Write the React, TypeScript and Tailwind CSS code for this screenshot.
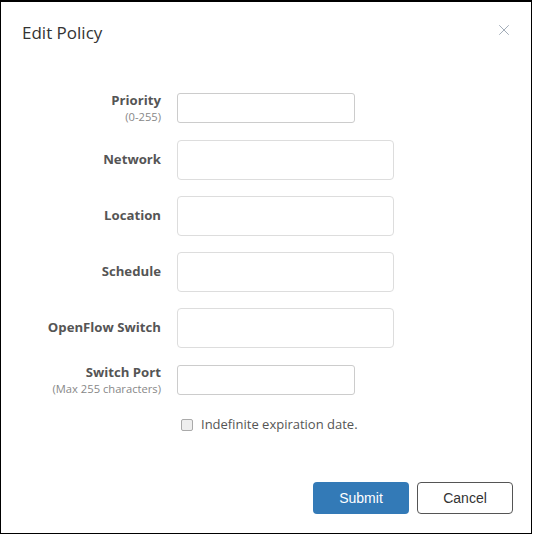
import { X } from 'lucide-react'

type Field = {
  label: string
  hint?: string
  size: 'sm' | 'lg'
}

const fields: Field[] = [
  { label: 'Priority', hint: '(0-255)', size: 'sm' },
  { label: 'Network', size: 'lg' },
  { label: 'Location', size: 'lg' },
  { label: 'Schedule', size: 'lg' },
  { label: 'OpenFlow Switch', size: 'lg' },
  { label: 'Switch Port', hint: '(Max 255 characters)', size: 'sm' },
]

function FieldRow({ field }: { field: Field }) {
  const small = field.size === 'sm'
  return (
    <div className="flex items-center gap-4">
      <div className="w-[160px] shrink-0 text-right leading-none">
        <div className="text-[13.2px] font-bold text-[#555]">{field.label}</div>
        {field.hint && <div className="mt-[3px] text-[11.2px] text-[#888]">{field.hint}</div>}
      </div>
      {small ? (
        <input
          type="text"
          className="h-[30px] w-[178px] rounded-[3px] border border-[#ccc] bg-white px-2 text-[13px] outline-none"
        />
      ) : (
        <input
          type="text"
          className="h-[40px] w-[217px] rounded-[4px] border border-[#ddd] bg-white px-2 text-[13px] outline-none"
        />
      )}
    </div>
  )
}

export default function App() {
  return (
    <div className="h-[534px] w-[533px] bg-white" style={{ fontFamily: '"Open Sans", sans-serif' }}>
      <div className="flex h-full w-[532px] flex-col border border-t-2 border-black">
        <div className="flex items-start justify-between pl-[21px] pr-[18px] pt-[18px]">
          <h1 className="text-[17px] leading-[26px] text-[#333]">Edit Policy</h1>
          <button className="mt-[1px] text-[#8f9baa]">
            <X size={18} strokeWidth={1.1} />
          </button>
        </div>

        <div className="mt-[47px] flex flex-col gap-[16px]">
          {fields.map((f, i) => (
            <div key={f.label} className={i === 1 || i === 5 ? 'mt-px' : ''}>
              <FieldRow field={f} />
            </div>
          ))}
        </div>

        <label className="ml-[180px] mt-[20px] flex items-center gap-[8px]">
          <span className="h-[12px] w-[12px] rounded-[2px] border border-[#aaa] bg-[#eee]" />
          <span className="text-[13px] text-[#555]">Indefinite expiration date.</span>
        </label>

        <div className="mt-auto flex justify-end gap-2 pb-[19px] pr-[18px]">
          <button
            className="h-[32px] w-[96px] rounded-[4px] bg-[#337ab7] text-[14px] text-white"
            style={{ fontFamily: '"Liberation Sans", Arial, sans-serif' }}
          >
            Submit
          </button>
          <button
            className="h-[32px] w-[96px] rounded-[4px] border border-[#555] bg-white text-[14px] text-[#333]"
            style={{ fontFamily: '"Liberation Sans", Arial, sans-serif' }}
          >
            Cancel
          </button>
        </div>
      </div>
    </div>
  )
}
